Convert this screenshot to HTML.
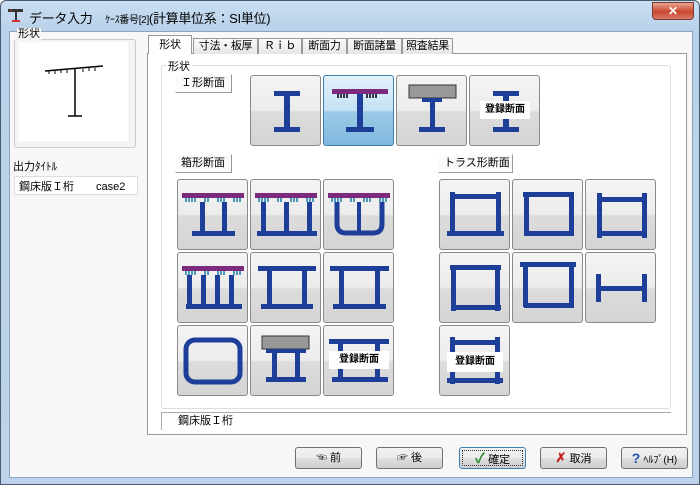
<!DOCTYPE html>
<html><head><meta charset="utf-8"><style>
*{box-sizing:border-box;margin:0;padding:0}
body{width:700px;height:485px;overflow:hidden;font-family:"Liberation Sans","Noto Sans CJK JP",sans-serif;font-size:12px;color:#000;background:#fff}
.win{position:absolute;left:0;top:0;width:700px;height:485px;background:linear-gradient(#c9def2,#b9d1ea 30px,#bcd3eb);border:1px solid #4a5a6a;border-radius:6px 6px 0 0}
.client{position:absolute;left:8px;top:30px;width:684px;height:447px;background:#f7f7f7;border:1px solid #8ea3bb}
.title{position:absolute;left:28px;top:7px;font-size:13px;letter-spacing:-0.3px}
.close{position:absolute;left:651px;top:1px;width:42px;height:18px;border-radius:0 0 4px 4px;background:linear-gradient(#e8a58f,#c9472f 55%,#d9776a);border:1px solid #7a3a30;color:#fff;font-weight:bold;text-align:center;font-size:12px;line-height:16px}
.abs{position:absolute}
.lbl{position:absolute;background:#fafafa;border-right:1px solid #999;border-bottom:1px solid #999;border-top:1px solid #fff;border-left:1px solid #fff;font-size:11px;padding-left:5px;line-height:17px;white-space:nowrap;overflow:hidden}
.btn{position:absolute;width:71px;height:71px;border:1px solid #8a8a8a;border-radius:3px;background:linear-gradient(#f4f4f4,#ececec 50%,#dcdcdc 52%,#d4d4d4)}
.btn.sel{background:linear-gradient(#e4f2fb,#c4e1f4 50%,#9ccbe8 52%,#7fb8de);border-color:#3c7fb1}
.btn svg{position:absolute;left:0;top:0}
.reg{position:absolute;background:#fff;font-size:10px;font-weight:bold;text-align:center;line-height:16px}
.tab{position:absolute;top:37px;height:16px;border:1px solid #999;border-bottom:none;background:linear-gradient(#fafafa,#e6e6e6);font-size:11px;text-align:center;line-height:15px;white-space:nowrap;overflow:hidden;letter-spacing:-0.3px}
.pb{position:absolute;top:446px;width:67px;height:22px;border:1px solid #707070;border-radius:3px;background:linear-gradient(#f2f2f2,#ebebeb 50%,#dddddd 52%,#cfcfcf);text-align:center;font-size:11px;line-height:20px}
</style></head><body>
<div class="win">
<svg class="abs" style="left:7px;top:8px" width="16" height="14"><rect x="0" y="0" width="15" height="3" fill="#333"/><rect x="2" y="1" width="2" height="1" fill="#c33"/><rect x="7" y="3" width="2" height="9" fill="#333"/><rect x="4" y="11" width="8" height="2" fill="#c33"/></svg>
<div class="title">データ入力　<span style="font-size:10px">ｹｰｽ番号[2]</span>(計算単位系：SI単位)</div>
<div class="close">✕</div>
<div class="client"></div>

<!-- left panel -->
<div class="abs" style="left:13px;top:38px;width:122px;height:109px;border:1px solid #ccc;border-radius:3px;background:#f4f4f4"></div>
<div class="abs" style="left:18px;top:41px;width:109px;height:99px;background:#fff"></div>
<div class="abs" style="left:16px;top:27px;font-size:11px;background:#f7f7f7;padding:0 1px;line-height:13px">形状</div>
<svg class="abs" style="left:40px;top:60px" width="70" height="60"><path d="M4 10 L62 5 M34 8 V55 M27 55 H41" stroke="#000" stroke-width="1.5" fill="none"/><path d="M8 10v3M14 10v3M20 9v3M26 9v3M42 8v3M48 7v3M54 7v3" stroke="#000"/></svg>
<div class="abs" style="left:12px;top:157px;font-size:11px">出力ﾀｲﾄﾙ</div>
<div class="abs" style="left:13px;top:175px;width:124px;height:19px;background:#fff;border:1px solid #ddd;font-size:11px;padding:1px 4px">鋼床版Ｉ桁　　case2</div>

<!-- tabs -->
<div class="abs" style="left:146px;top:52px;width:540px;height:382px;background:#fff;border:1px solid #999"></div>
<div class="tab" style="left:147px;top:34px;width:44px;height:19px;background:#fff;line-height:18px">形状</div>
<div class="tab" style="left:192px;width:65px">寸法・板厚</div>
<div class="tab" style="left:257px;width:44px">Ｒｉｂ</div>
<div class="tab" style="left:301px;width:45px">断面力</div>
<div class="tab" style="left:346px;width:55px">断面諸量</div>
<div class="tab" style="left:401px;width:51px">照査結果</div>

<div class="abs" style="left:160px;top:64px;width:510px;height:344px;border:1px solid #d5dfe5;border-radius:3px"></div>
<div class="abs" style="left:165px;top:57px;background:#fff;padding:0 2px;font-size:11px">形状</div>

<div class="lbl" style="left:174px;top:73px;width:57px;height:19px">Ｉ形断面</div>
<div class="lbl" style="left:174px;top:153px;width:57px;height:19px">箱形断面</div>
<div class="lbl" style="left:437px;top:153px;width:75px;height:19px">トラス形断面</div>

<svg width="0" height="0" style="position:absolute"><defs>
<g id="ibeam"><rect x="23" y="15" width="26" height="5" fill="#1d3f9a"/><rect x="33" y="20" width="6" height="32" fill="#1d3f9a"/><rect x="23" y="51" width="26" height="5" fill="#1d3f9a"/></g>
<g id="deck"><rect x="4" y="13" width="62" height="5" fill="#7b2a7e"/><path d="M8 18v4M11 18v4M14 18v4M17 18v4M27 18v4M30 18v4M40 18v4M43 18v4M46 18v4M56 18v4M59 18v4M62 18v4" stroke="#4a9ab8" stroke-width="2"/></g>
</defs></svg>

<div class="btn" style="left:249px;top:74px"><svg width="71" height="71"><use href="#ibeam"/></svg></div>
<div class="btn sel" style="left:322px;top:74px"><svg width="71" height="71"><rect x="8" y="13" width="56" height="5" fill="#7b2a7e"/><path d="M14 18v4M17 18v4M20 18v4M23 18v4M43 18v4M46 18v4M49 18v4M52 18v4" stroke="#334" stroke-width="2"/><rect x="33" y="18" width="6" height="34" fill="#1d3f9a"/><rect x="22" y="51" width="28" height="5" fill="#1d3f9a"/></svg></div>
<div class="btn" style="left:395px;top:74px"><svg width="71" height="71"><rect x="12" y="9" width="47" height="13" fill="#999" stroke="#333"/><rect x="25" y="22" width="20" height="4" fill="#1d3f9a"/><rect x="33" y="26" width="5" height="26" fill="#1d3f9a"/><rect x="22" y="51" width="26" height="5" fill="#1d3f9a"/></svg></div>
<div class="btn" style="left:468px;top:74px"><svg width="71" height="71"><use href="#ibeam"/></svg><div class="reg" style="left:10px;top:25px;width:50px;height:18px;line-height:18px">登録断面</div></div>

<div class="btn" style="left:176px;top:178px"><svg width="71" height="71"><use href="#deck"/><rect x="22" y="22" width="5" height="30" fill="#1d3f9a"/><rect x="44" y="22" width="5" height="30" fill="#1d3f9a"/><rect x="14" y="51" width="43" height="5" fill="#1d3f9a"/></svg></div>
<div class="btn" style="left:249px;top:178px"><svg width="71" height="71"><use href="#deck"/><rect x="10" y="22" width="5" height="30" fill="#1d3f9a"/><rect x="33" y="22" width="5" height="30" fill="#1d3f9a"/><rect x="56" y="22" width="5" height="30" fill="#1d3f9a"/><rect x="6" y="51" width="60" height="5" fill="#1d3f9a"/></svg></div>
<div class="btn" style="left:322px;top:178px"><svg width="71" height="71"><use href="#deck"/><path d="M13 22 V44 Q13 53 22 53 H49 Q58 53 58 44 V22" stroke="#1d3f9a" stroke-width="5" fill="none"/><rect x="33" y="22" width="4" height="30" fill="#1d3f9a"/></svg></div>

<div class="btn" style="left:176px;top:251px"><svg width="71" height="71"><use href="#deck"/><rect x="9" y="22" width="5" height="30" fill="#1d3f9a"/><rect x="23" y="22" width="5" height="30" fill="#1d3f9a"/><rect x="37" y="22" width="5" height="30" fill="#1d3f9a"/><rect x="51" y="22" width="5" height="30" fill="#1d3f9a"/><rect x="8" y="51" width="56" height="5" fill="#1d3f9a"/></svg></div>
<div class="btn" style="left:249px;top:251px"><svg width="71" height="71"><rect x="7" y="13" width="58" height="5" fill="#1d3f9a"/><rect x="16" y="18" width="5" height="34" fill="#1d3f9a"/><rect x="51" y="18" width="5" height="34" fill="#1d3f9a"/><rect x="10" y="51" width="52" height="5" fill="#1d3f9a"/></svg></div>
<div class="btn" style="left:322px;top:251px"><svg width="71" height="71"><rect x="6" y="13" width="59" height="5" fill="#1d3f9a"/><rect x="15" y="18" width="5" height="34" fill="#1d3f9a"/><rect x="51" y="18" width="5" height="34" fill="#1d3f9a"/><rect x="9" y="51" width="53" height="5" fill="#1d3f9a"/></svg></div>

<div class="btn" style="left:176px;top:324px"><svg width="71" height="71"><rect x="8" y="14" width="54" height="42" rx="9" stroke="#1d3f9a" stroke-width="5" fill="none"/></svg></div>
<div class="btn" style="left:249px;top:324px"><svg width="71" height="71"><rect x="11" y="10" width="47" height="13" fill="#999" stroke="#333"/><rect x="15" y="23" width="40" height="4" fill="#1d3f9a"/><rect x="21" y="27" width="5" height="25" fill="#1d3f9a"/><rect x="44" y="27" width="5" height="25" fill="#1d3f9a"/><rect x="15" y="51" width="40" height="5" fill="#1d3f9a"/></svg></div>
<div class="btn" style="left:322px;top:324px"><svg width="71" height="71"><rect x="5" y="13" width="60" height="5" fill="#1d3f9a"/><rect x="14" y="18" width="5" height="34" fill="#1d3f9a"/><rect x="51" y="18" width="5" height="34" fill="#1d3f9a"/><rect x="8" y="51" width="56" height="5" fill="#1d3f9a"/></svg><div class="reg" style="left:5px;top:25px;width:60px;height:18px;line-height:18px">登録断面</div></div>

<div class="btn" style="left:438px;top:178px"><svg width="71" height="71"><rect x="10" y="12" width="5" height="44" fill="#1d3f9a"/><rect x="56" y="12" width="5" height="44" fill="#1d3f9a"/><rect x="10" y="14" width="51" height="5" fill="#1d3f9a"/><rect x="7" y="51" width="57" height="5" fill="#1d3f9a"/></svg></div>
<div class="btn" style="left:511px;top:178px"><svg width="71" height="71"><rect x="10" y="12" width="51" height="5" fill="#1d3f9a"/><rect x="11" y="15" width="5" height="40" fill="#1d3f9a"/><rect x="56" y="15" width="5" height="40" fill="#1d3f9a"/><rect x="11" y="51" width="50" height="5" fill="#1d3f9a"/></svg></div>
<div class="btn" style="left:584px;top:178px"><svg width="71" height="71"><rect x="11" y="13" width="5" height="45" fill="#1d3f9a"/><rect x="56" y="13" width="5" height="45" fill="#1d3f9a"/><rect x="11" y="17" width="50" height="5" fill="#1d3f9a"/><rect x="11" y="51" width="50" height="5" fill="#1d3f9a"/></svg></div>
<div class="btn" style="left:438px;top:251px"><svg width="71" height="71"><rect x="10" y="12" width="51" height="5" fill="#1d3f9a"/><rect x="11" y="12" width="5" height="46" fill="#1d3f9a"/><rect x="55" y="12" width="5" height="46" fill="#1d3f9a"/><rect x="11" y="52" width="50" height="5" fill="#1d3f9a"/></svg></div>
<div class="btn" style="left:511px;top:251px"><svg width="71" height="71"><rect x="7" y="9" width="56" height="5" fill="#1d3f9a"/><rect x="10" y="12" width="5" height="42" fill="#1d3f9a"/><rect x="56" y="12" width="5" height="42" fill="#1d3f9a"/><rect x="11" y="50" width="50" height="5" fill="#1d3f9a"/></svg></div>
<div class="btn" style="left:584px;top:251px"><svg width="71" height="71"><rect x="10" y="21" width="5" height="28" fill="#1d3f9a"/><rect x="56" y="21" width="5" height="28" fill="#1d3f9a"/><rect x="14" y="33" width="43" height="5" fill="#1d3f9a"/></svg></div>
<div class="btn" style="left:438px;top:324px"><svg width="71" height="71"><rect x="10" y="11" width="5" height="47" fill="#1d3f9a"/><rect x="55" y="11" width="5" height="47" fill="#1d3f9a"/><rect x="10" y="14" width="50" height="5" fill="#1d3f9a"/><rect x="7" y="52" width="56" height="5" fill="#1d3f9a"/></svg><div class="reg" style="left:7px;top:26px;width:56px;height:20px;line-height:20px">登録断面</div></div>

<div class="abs" style="left:160px;top:411px;width:510px;height:18px;border-top:1px solid #aaa;border-left:1px solid #aaa;background:#fff;padding-left:16px;line-height:17px;font-size:11px">鋼床版Ｉ桁</div>

<div class="pb" style="left:294px">☜ 前</div>
<div class="pb" style="left:375px">☞ 後</div>
<div class="pb" style="left:458px;border:1px solid #3c7fb1;outline:1px dotted #333;outline-offset:-4px"><span style="color:#2a8a2a;font-weight:bold;font-size:14px">✓</span> 確定</div>
<div class="pb" style="left:539px"><span style="color:#c02020;font-weight:bold;font-size:13px">✗</span> 取消</div>
<div class="pb" style="left:620px"><span style="color:#1d4fb0;font-weight:bold;font-size:14px">?</span> <span style="font-size:10px">ﾍﾙﾌﾟ(H)</span></div>
</div>
</body></html>
